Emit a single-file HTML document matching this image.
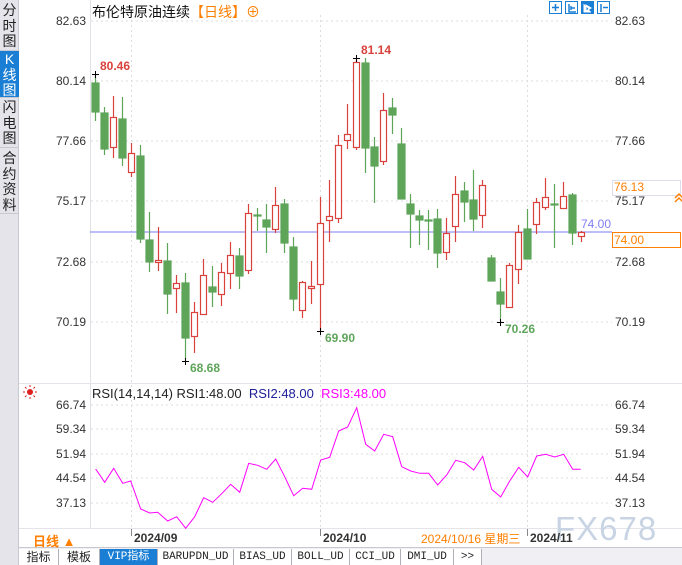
<!DOCTYPE html>
<html><head><meta charset="utf-8"><style>
body{margin:0;width:682px;height:565px;overflow:hidden;background:#fff;font-family:"Liberation Sans","Noto Sans CJK SC",sans-serif;position:relative}
.abs{position:absolute}
.side{left:0;top:0;width:18px;height:565px;background:#e4e4ea;border-right:1px solid #c8c8d0}
.tab{position:absolute;left:0;width:19px;font-size:14px;line-height:15.5px;text-align:center;color:#222;border-bottom:1px solid #c8c8d0}
.tb{position:absolute;top:549px;height:16px;font-size:11px;line-height:16px;text-align:center;border-right:1px solid #b0b0b8;color:#222;font-family:"Liberation Mono","Noto Sans CJK SC",monospace;background:#fff}
.lab{position:absolute;font-size:12px;color:#333}
</style></head><body>
<div class="abs side"></div>
<div class="tab" style="top:3px;height:47px">分<br>时<br>图</div>
<div class="tab" style="top:51px;height:45px;padding-top:1px;background:#1a7fd4;color:#fff">K<br>线<br>图</div>
<div class="tab" style="top:100px;height:47px">闪<br>电<br>图</div>
<div class="tab" style="top:151px;height:62px">合<br>约<br>资<br>料</div>

<svg class="abs" style="left:0;top:0" width="682" height="565">
<g stroke="#ddd" stroke-dasharray="2,3">
<line x1="91" x2="612" y1="21" y2="21"/><line x1="91" x2="612" y1="81" y2="81"/><line x1="91" x2="612" y1="141" y2="141"/><line x1="91" x2="612" y1="201" y2="201"/><line x1="91" x2="612" y1="262" y2="262"/><line x1="91" x2="612" y1="322" y2="322"/>
<line x1="91" x2="612" y1="405" y2="405"/><line x1="91" x2="612" y1="429" y2="429"/><line x1="91" x2="612" y1="454" y2="454"/><line x1="91" x2="612" y1="478" y2="478"/><line x1="91" x2="612" y1="503" y2="503"/>
<line x1="131.5" x2="131.5" y1="15" y2="528"/><line x1="320.5" x2="320.5" y1="15" y2="528"/><line x1="527.5" x2="527.5" y1="15" y2="528"/>
</g>
<line x1="90.5" x2="90.5" y1="0" y2="528" stroke="#e0e0e6"/>
<line x1="19" x2="682" y1="383.5" y2="383.5" stroke="#e4e4ea"/>
<line x1="19" x2="682" y1="528.5" y2="528.5" stroke="#e4e4ea"/>
<line x1="19" x2="682" y1="547.5" y2="547.5" stroke="#c8c8d0"/>
<line x1="131.5" x2="131.5" y1="529" y2="536" stroke="#888"/><line x1="320.5" x2="320.5" y1="529" y2="536" stroke="#888"/><line x1="527.5" x2="527.5" y1="529" y2="536" stroke="#888"/>
<line x1="90" x2="612" y1="232" y2="232" stroke="#7b7bef"/>
<rect x="612.5" y="180.5" width="68" height="15" fill="#fff" stroke="#dde"/>
<rect x="612.5" y="232.5" width="68" height="15" fill="#fff" stroke="#ff7f00"/>
<g id="c" stroke-width="1.2">
<g stroke="#5ea55a" fill="#5ea55a">
<line x1="95.5" x2="95.5" y1="74" y2="121"/><rect x="92" y="83" width="7" height="29"/>
<line x1="104.5" x2="104.5" y1="107" y2="155"/><rect x="101" y="113" width="7" height="36"/>
<line x1="122.5" x2="122.5" y1="97" y2="166"/><rect x="119" y="119" width="7" height="39"/>
<line x1="140.5" x2="140.5" y1="145" y2="243"/><rect x="137" y="156" width="7" height="83"/>
<line x1="149.5" x2="149.5" y1="212" y2="272"/><rect x="146" y="240" width="7" height="22"/>
<line x1="167.5" x2="167.5" y1="243" y2="314"/><rect x="164" y="261" width="7" height="33"/>
<line x1="185.5" x2="185.5" y1="273" y2="361"/><rect x="182" y="283" width="7" height="55"/>
<line x1="212.5" x2="212.5" y1="266" y2="307"/><rect x="209" y="287" width="7" height="5"/>
<line x1="239.5" x2="239.5" y1="248" y2="289"/><rect x="236" y="256" width="7" height="20"/>
<line x1="257.5" x2="257.5" y1="208" y2="231"/><rect x="254" y="215" width="7" height="1"/>
<line x1="266.5" x2="266.5" y1="204" y2="253"/><rect x="263" y="220" width="7" height="7"/>
<line x1="284.5" x2="284.5" y1="199" y2="253"/><rect x="281" y="204" width="7" height="39"/>
<line x1="293.5" x2="293.5" y1="237" y2="311"/><rect x="290" y="247" width="7" height="52"/>
<line x1="365.5" x2="365.5" y1="58" y2="173"/><rect x="362" y="63" width="7" height="85"/>
<line x1="374.5" x2="374.5" y1="137" y2="203"/><rect x="371" y="147" width="7" height="19"/>
<line x1="392.5" x2="392.5" y1="98" y2="134"/><rect x="389" y="108" width="7" height="7"/>
<line x1="401.5" x2="401.5" y1="128" y2="199"/><rect x="398" y="144" width="7" height="55"/>
<line x1="410.5" x2="410.5" y1="194" y2="248"/><rect x="407" y="204" width="7" height="10"/>
<line x1="419.5" x2="419.5" y1="210" y2="245"/><rect x="416" y="216" width="7" height="4"/>
<line x1="428.5" x2="428.5" y1="210" y2="250"/><rect x="425" y="220" width="7" height="1"/>
<line x1="437.5" x2="437.5" y1="209" y2="268"/><rect x="434" y="219" width="7" height="34"/>
<line x1="464.5" x2="464.5" y1="182" y2="222"/><rect x="461" y="191" width="7" height="11"/>
<line x1="473.5" x2="473.5" y1="170" y2="231"/><rect x="470" y="200" width="7" height="19"/>
<line x1="491.5" x2="491.5" y1="255" y2="281"/><rect x="488" y="258" width="7" height="23"/>
<line x1="500.5" x2="500.5" y1="278" y2="323"/><rect x="497" y="292" width="7" height="12"/>
<line x1="527.5" x2="527.5" y1="209" y2="259"/><rect x="524" y="229" width="7" height="30"/>
<line x1="554.5" x2="554.5" y1="184" y2="248"/><rect x="551" y="204" width="7" height="1"/>
<line x1="572.5" x2="572.5" y1="193" y2="245"/><rect x="569" y="195" width="7" height="38"/>
</g>
<g stroke="#d9423c" fill="#fff">
<line x1="113.5" x2="113.5" y1="96" y2="158"/><rect x="110.5" y="117.5" width="6" height="30"/>
<line x1="131.5" x2="131.5" y1="143" y2="177"/><rect x="128.5" y="153.5" width="6" height="19"/>
<line x1="158.5" x2="158.5" y1="227" y2="271"/><rect x="155.5" y="260.5" width="6" height="2"/>
<line x1="176.5" x2="176.5" y1="275" y2="313"/><rect x="173.5" y="283.5" width="6" height="5"/>
<line x1="194.5" x2="194.5" y1="302" y2="353"/><rect x="191.5" y="312.5" width="6" height="24"/>
<line x1="203.5" x2="203.5" y1="259" y2="314"/><rect x="200.5" y="275.5" width="6" height="39"/>
<line x1="221.5" x2="221.5" y1="263" y2="306"/><rect x="218.5" y="272.5" width="6" height="22"/>
<line x1="230.5" x2="230.5" y1="242" y2="289"/><rect x="227.5" y="255.5" width="6" height="18"/>
<line x1="248.5" x2="248.5" y1="204" y2="274"/><rect x="245.5" y="213.5" width="6" height="57"/>
<line x1="275.5" x2="275.5" y1="187" y2="233"/><rect x="272.5" y="205.5" width="6" height="24"/>
<line x1="302.5" x2="302.5" y1="281" y2="318"/><rect x="299.5" y="282.5" width="6" height="28"/>
<line x1="311.5" x2="311.5" y1="261" y2="304"/><rect x="308.5" y="286.5" width="6" height="2"/>
<line x1="320.5" x2="320.5" y1="197" y2="331"/><rect x="317.5" y="223.5" width="6" height="61"/>
<line x1="329.5" x2="329.5" y1="180" y2="242"/><rect x="326.5" y="216.5" width="6" height="4"/>
<line x1="338.5" x2="338.5" y1="135" y2="223"/><rect x="335.5" y="145.5" width="6" height="73"/>
<line x1="347.5" x2="347.5" y1="104" y2="149"/><rect x="344.5" y="134.5" width="6" height="6"/>
<line x1="356.5" x2="356.5" y1="58" y2="150"/><rect x="353.5" y="62.5" width="6" height="85"/>
<line x1="383.5" x2="383.5" y1="93" y2="165"/><rect x="380.5" y="110.5" width="6" height="51"/>
<line x1="446.5" x2="446.5" y1="218" y2="260"/><rect x="443.5" y="233.5" width="6" height="19"/>
<line x1="455.5" x2="455.5" y1="176" y2="242"/><rect x="452.5" y="194.5" width="6" height="32"/>
<line x1="482.5" x2="482.5" y1="180" y2="228"/><rect x="479.5" y="185.5" width="6" height="30"/>
<line x1="509.5" x2="509.5" y1="263" y2="308"/><rect x="506.5" y="265.5" width="6" height="42"/>
<line x1="518.5" x2="518.5" y1="225" y2="284"/><rect x="515.5" y="232.5" width="6" height="37"/>
<line x1="536.5" x2="536.5" y1="198" y2="234"/><rect x="533.5" y="202.5" width="6" height="22"/>
<line x1="545.5" x2="545.5" y1="178" y2="210"/><rect x="542.5" y="197.5" width="6" height="10"/>
<line x1="563.5" x2="563.5" y1="182" y2="209"/><rect x="560.5" y="196.5" width="6" height="12"/>
<line x1="581.5" x2="581.5" y1="231" y2="242"/><rect x="578.5" y="232.5" width="6" height="4"/>
</g>
</g>
<g stroke="#000" stroke-width="1">
<line x1="92" x2="99" y1="74.5" y2="74.5"/><line x1="95.5" x2="95.5" y1="71" y2="78"/>
<line x1="182" x2="189" y1="361.5" y2="361.5"/><line x1="185.5" x2="185.5" y1="358" y2="365"/>
<line x1="317" x2="324" y1="331.5" y2="331.5"/><line x1="320.5" x2="320.5" y1="328" y2="335"/>
<line x1="353" x2="360" y1="58.5" y2="58.5"/><line x1="356.5" x2="356.5" y1="55" y2="62"/>
<line x1="497" x2="504" y1="322.5" y2="322.5"/><line x1="500.5" x2="500.5" y1="319" y2="326"/>
</g>
<polyline fill="none" stroke="#ff00ff" stroke-width="1" points="95.7,469 104.7,482.3 113.7,468.3 122.7,483.3 130.7,481 140.7,509 149.7,513 157.7,512.3 167.7,521 176.7,516.7 185.7,528.3 194.7,516.7 203.7,497.7 212.7,502.3 221.7,493.7 230.7,484.3 239.7,492.3 248.7,463.3 257.7,465.3 266.7,469.3 275.7,459 284.7,476.7 293.7,495.7 302.7,488.3 311.7,489.3 320.7,460 329.7,457.3 338.7,431 347.7,427 356.7,407.7 365.7,444.3 374.7,451 383.7,434.3 392.7,436.7 401.7,466.7 410.7,471 419.7,473.3 428.7,473.3 437.7,485 446.7,475 455.7,460.3 464.7,462.7 473.7,470 482.7,456.3 491.7,489.3 500.7,497 509.7,481 518.7,467.3 527.7,477 536.7,456 545.7,454.3 554.7,457 563.7,454.3 572.7,469.3 580.7,469.3"/>
<g fill="#fff" stroke="#1a7fd4"><rect x="549.5" y="1.5" width="12" height="12"/><rect x="565.5" y="1.5" width="12" height="12"/><rect x="597.5" y="1.5" width="12" height="12"/></g>
<rect x="581" y="1" width="13" height="13" fill="#1a7fd4"/>
<g stroke="#1a7fd4" stroke-width="1.5" fill="none"><path d="M555.5 4v7M552 7.5h7"/><path d="M569 4v8h7M571 6v4M571 8h4"/><path d="M601 4v8M603 7.5h5"/></g>
<path d="M584 4v8h7M586 5l5 3-5 3z" stroke="#fff" fill="#fff"/>
<circle cx="30" cy="392" r="3" fill="#e02020"/>
<g stroke="#e02020" stroke-width="1"><path d="M30 385v2M30 397v2M23 392h2M35 392h2M25 387l1.5 1.5M35 387l-1.5 1.5M25 397l1.5-1.5M35 397l-1.5-1.5"/></g>
<path d="M675 198l4-4 4 4M675 202l4-4 4 4" stroke="#ff7f00" stroke-width="1.5" fill="none"/>
</svg>

<div class="abs" style="left:92px;top:2px;font-size:14px;color:#111">布伦特原油连续<span style="color:#ff7f00">【日线】⊕</span></div>
<div class="lab" style="left:56px;top:14px">82.63</div><div class="lab" style="left:56px;top:74px">80.14</div><div class="lab" style="left:56px;top:134px">77.66</div><div class="lab" style="left:56px;top:194px">75.17</div><div class="lab" style="left:56px;top:255px">72.68</div><div class="lab" style="left:56px;top:315px">70.19</div>
<div class="lab" style="left:615px;top:14px">82.63</div><div class="lab" style="left:615px;top:74px">80.14</div><div class="lab" style="left:615px;top:134px">77.66</div><div class="lab" style="left:615px;top:194px">75.17</div><div class="lab" style="left:615px;top:255px">72.68</div><div class="lab" style="left:615px;top:315px">70.19</div>
<div class="lab" style="left:614px;top:180px;color:#ff7f00">76.13</div>
<div class="lab" style="left:614px;top:233px;color:#ff7f00">74.00</div>
<div class="lab" style="left:581px;top:217px;color:#8080f0">74.00</div>
<div class="lab" style="left:100px;top:59px;color:#d9423c;font-weight:bold">80.46</div>
<div class="lab" style="left:361px;top:43px;color:#d9423c;font-weight:bold">81.14</div>
<div class="lab" style="left:190px;top:361px;color:#5ea55a;font-weight:bold">68.68</div>
<div class="lab" style="left:325px;top:331px;color:#5ea55a;font-weight:bold">69.90</div>
<div class="lab" style="left:505px;top:322px;color:#5ea55a;font-weight:bold">70.26</div>
<div class="lab" style="left:56px;top:398px">66.74</div><div class="lab" style="left:56px;top:422px">59.34</div><div class="lab" style="left:56px;top:447px">51.94</div><div class="lab" style="left:56px;top:471px">44.54</div><div class="lab" style="left:56px;top:496px">37.13</div>
<div class="lab" style="left:615px;top:398px">66.74</div><div class="lab" style="left:615px;top:422px">59.34</div><div class="lab" style="left:615px;top:447px">51.94</div><div class="lab" style="left:615px;top:471px">44.54</div><div class="lab" style="left:615px;top:496px">37.13</div>
<div class="abs" style="left:92px;top:386px;font-size:13px;color:#222;white-space:nowrap">RSI(14,14,14) RSI1:48.00 &nbsp;<span style="color:#20209a">RSI2:48.00</span> &nbsp;<span style="color:#ff00ff">RSI3:48.00</span></div>
<div class="abs" style="left:555px;top:510px;font-size:33px;color:#c8d4e4;letter-spacing:1px">FX678</div>
<div class="abs" style="left:33px;top:531px;font-size:13px;color:#ff7f00;font-weight:bold">日线 ▲</div>
<div class="lab" style="left:134px;top:531px;font-weight:bold">2024/09</div>
<div class="lab" style="left:323px;top:531px;font-weight:bold">2024/10</div>
<div class="abs" style="left:421px;top:530px;font-size:12px;color:#ff7f00">2024/10/16 星期三</div>
<div class="lab" style="left:530px;top:531px;font-weight:bold">2024/11</div>
<div class="abs" style="left:19px;top:548px;width:663px;height:17px;background:#f0f0f4"></div>
<div class="tb" style="left:19px;width:39px;font-family:'Liberation Sans','Noto Sans CJK SC',sans-serif;font-size:12px">指标</div>
<div class="tb" style="left:59px;width:40px;font-family:'Liberation Sans','Noto Sans CJK SC',sans-serif;font-size:12px">模板</div>
<div class="tb" style="left:100px;width:57px;background:#1a7fd4;color:#fff">VIP指标</div>
<div class="tb" style="left:158px;width:75px">BARUPDN_UD</div>
<div class="tb" style="left:234px;width:57px">BIAS_UD</div>
<div class="tb" style="left:292px;width:57px">BOLL_UD</div>
<div class="tb" style="left:350px;width:50px">CCI_UD</div>
<div class="tb" style="left:401px;width:52px">DMI_UD</div>
<div class="tb" style="left:454px;width:27px">&gt;&gt;</div>
</body></html>
